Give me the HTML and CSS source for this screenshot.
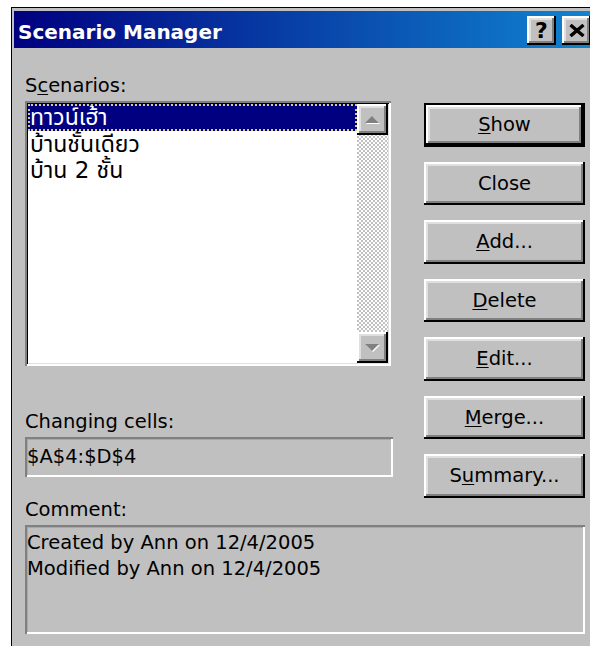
FILE: index.html
```html
<!DOCTYPE html>
<html lang="en">
<head>
<meta charset="utf-8">
<title>Scenario Manager</title>
<link rel="stylesheet" href="styles.css">
</head>
<body>
<div class="dialog">
  <div class="titlebar">
    <span class="title">Scenario Manager</span>
    <div class="caption-buttons">
      <span class="cap-btn help">?</span>
      <span class="cap-btn close">
        <svg width="16" height="13" viewBox="0 0 16 13"><path d="M1.5 1 L14.5 12 M14.5 1 L1.5 12" stroke="#000" stroke-width="3.4" fill="none"/></svg>
      </span>
    </div>
  </div>

  <div class="content">
    <div class="top">
      <div class="left">
        <div class="label">S<u>c</u>enarios:</div>
        <div class="listbox">
          <ul class="items">
            <li class="selected">ทาวน์เฮ้า</li>
            <li>บ้านชั้นเดียว</li>
            <li>บ้าน 2 ชั้น</li>
          </ul>
          <div class="scrollbar">
            <span class="arrow">
              <svg width="17" height="9" viewBox="0 0 17 9"><polygon points="2,9 9,2 16,9" fill="#fff"/><polygon points="1,8 8,1 15,8" fill="#808080"/></svg>
            </span>
            <span class="track"></span>
            <span class="arrow">
              <svg width="17" height="9" viewBox="0 0 17 9"><polygon points="2,2 16,2 9,9" fill="#fff"/><polygon points="1,1 15,1 8,8" fill="#808080"/></svg>
            </span>
          </div>
        </div>
        <div class="label changing">Changing cells:</div>
        <div class="field">$A$4:$D$4</div>
      </div>

      <div class="buttons">
        <span class="btn default"><u>S</u>how</span>
        <span class="btn">Close</span>
        <span class="btn"><u>A</u>dd...</span>
        <span class="btn"><u>D</u>elete</span>
        <span class="btn"><u>E</u>dit...</span>
        <span class="btn"><u>M</u>erge...</span>
        <span class="btn">S<u>u</u>mmary...</span>
      </div>
    </div>

    <div class="label comment-label">Comment:</div>
    <div class="comment">Created by Ann on 12/4/2005<br>Modified by Ann on 12/4/2005</div>
  </div>
</div>
</body>
</html>
```

FILE: styles.css
```css
html, body {
  margin: 0;
  padding: 0;
  overflow: hidden;
  background: #fff;
}

body {
  font-family: "DejaVu Sans", "Noto Sans Thai", "Noto Sans", sans-serif;
  font-size: 19.5px;
  color: #000;
}

u {
  text-underline-offset: 2px;
}

/* window frame */
.dialog {
  margin: 7px 0 0 11px;
  width: 580px;
  height: 635px;
  box-sizing: content-box;
  padding: 3px 2px 0;
  border-left: 1px solid #000;
  border-top: 1px solid #000;
  background: #c0c0c0;
}

.titlebar {
  height: 37px;
  display: flex;
  align-items: center;
  justify-content: space-between;
  padding: 0 3px 0 4px;
  background: linear-gradient(to right, #000080, #1084d0);
}

.title {
  color: #fff;
  font-weight: bold;
  font-size: 20px;
  padding-top: 5px;
}

.caption-buttons {
  display: flex;
  gap: 6px;
  margin-top: 2px;
}

/* raised 3D bevel shared by all push buttons */
.cap-btn,
.btn,
.arrow {
  box-sizing: border-box;
  background: #c0c0c0;
  box-shadow:
    inset -2px -2px 0 #000,
    inset 2px 2px 0 #fff,
    inset -4px -4px 0 #808080,
    inset 4px 4px 0 #dfdfdf;
}

.cap-btn {
  width: 29px;
  height: 29px;
  display: flex;
  align-items: center;
  justify-content: center;
  font-weight: bold;
  font-size: 22px;
  line-height: 1;
}

.cap-btn svg {
  margin-top: -1px;
}

/* dialog body */
.content {
  padding: 26px 9px 0 11px;
}

.top {
  display: flex;
  justify-content: space-between;
  align-items: flex-start;
}

.left {
  width: 368px;
}

.label {
  line-height: 23px;
  height: 23px;
  white-space: nowrap;
}

.label.changing {
  margin-top: 44px;
}

/* list box */
.listbox {
  margin-top: 4px;
  width: 366px;
  height: 265px;
  box-sizing: border-box;
  padding: 3px;
  display: flex;
  background: #fff;
  box-shadow:
    inset 2px 2px 0 #808080,
    inset -2px -2px 0 #fff,
    inset 3px 3px 0 #000,
    inset -3px -3px 0 #dfdfdf;
}

.items {
  flex: 1;
  margin: 0;
  padding: 0;
  list-style: none;
  font-size: 23px;
}

.items li {
  height: 26px;
  line-height: 26px;
  padding-left: 2px;
  white-space: nowrap;
  box-sizing: border-box;
}

.items li.selected {
  height: 27px;
  background: #000080;
  color: #fff;
  outline: 2px dotted #d8cf82;
  outline-offset: -2px;
}

.scrollbar {
  width: 31px;
  display: flex;
  flex-direction: column;
  background-color: #c0c0c0;
  background-image: repeating-conic-gradient(#fff 0 25%, #c0c0c0 0 50%);
  background-size: 4px 4px;
}

.arrow {
  height: 31px;
  display: flex;
  align-items: center;
  justify-content: center;
}

.track {
  flex: 1;
}

/* sunken read-only boxes */
.field,
.comment {
  box-sizing: border-box;
  margin-top: 4px;
  box-shadow:
    inset 2px 2px 0 #808080,
    inset -2px -2px 0 #fff,
    inset 3px 3px 0 #a8a8a8;
}

.field {
  height: 40px;
  padding: 8px 0 0 2px;
  line-height: 23px;
}

/* command buttons */
.buttons {
  width: 161px;
  margin-top: 29px;
  display: flex;
  flex-direction: column;
  gap: 15px;
}

.btn {
  height: 43.5px;
  display: flex;
  align-items: center;
  justify-content: center;
  line-height: 23px;
}

.btn.default {
  border: 2px solid #000;
}

.comment-label {
  margin-top: 0.5px;
}

.comment {
  height: 109px;
  padding: 5px 0 0 2px;
  line-height: 26px;
}
```
